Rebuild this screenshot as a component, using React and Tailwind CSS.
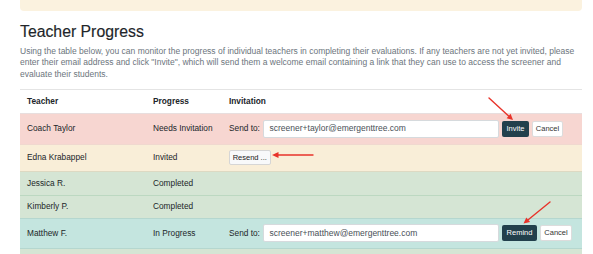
import React from "react";

function SendRow({ email, action, actionW, cancelW }) {
  return (
    <div className="flex items-center">
      <span className="w-[34px] shrink-0 text-[8.3px] text-[#212529]">Send to:</span>
      <div className="w-[236px] h-[18px] shrink-0 bg-white border border-[#d6dadd] rounded-[2px] flex items-center pl-[5.5px] text-[8.5px] text-[#495057]">
        {email}
      </div>
      <button
        className="ml-[3px] h-[16px] shrink-0 bg-[#22404c] rounded-[2px] text-white text-[7.5px] flex items-center justify-center"
        style={{ width: actionW }}
      >
        {action}
      </button>
      <button
        className="ml-[3px] h-[16px] shrink-0 bg-white border border-[#dcdcdc] rounded-[2px] text-[#333] text-[7.5px] flex items-center justify-center"
        style={{ width: cancelW }}
      >
        Cancel
      </button>
    </div>
  );
}

function Row({ h, bg, border, name, progress, children }) {
  return (
    <div className={`flex items-center border-t ${h} ${bg} ${border}`}>
      <div className="w-[126px] pl-[7px] text-[8.3px] text-[#212529]">{name}</div>
      <div className="w-[76px] pl-[7px] text-[8.3px] text-[#212529]">{progress}</div>
      <div className="flex-1 pl-[7px]">{children}</div>
    </div>
  );
}

export default function App() {
  return (
    <div className="relative w-[593px] h-[254px] overflow-hidden bg-white font-['Liberation_Sans',Arial,sans-serif]">
      <div className="ml-[20px] w-[562px]">
        <div className="h-[11px] bg-[#fbf2df] rounded-b-[4px]" />
        <h1 className="mt-[10.5px] text-[15.8px] leading-[19px] text-[#212529] [-webkit-text-stroke:0.15px_#212529]">Teacher Progress</h1>
        <p className="mt-[5px] text-[8.5px] leading-[11.5px] text-[#6c757d]">
          <span className="block whitespace-nowrap">
            Using the table below, you can monitor the progress of individual teachers in completing their evaluations. If any teachers are not yet invited, please
          </span>
          <span className="block whitespace-nowrap">
            enter their email address and click "Invite", which will send them a welcome email containing a link that they can use to access the screener and
          </span>
          <span className="block whitespace-nowrap">evaluate their students.</span>
        </p>
        <div className="mt-[8.5px]">
          <div className="flex items-center h-[24px] border-t border-[#e4e4e4] bg-white">
            <div className="w-[126px] pl-[7px] text-[8.3px] font-bold text-[#212529]">Teacher</div>
            <div className="w-[76px] pl-[7px] text-[8.3px] font-bold text-[#212529]">Progress</div>
            <div className="flex-1 pl-[7px] text-[8.3px] font-bold text-[#212529]">Invitation</div>
          </div>
          <Row h="h-[31px]" bg="bg-[#f7d6d1]" border="border-[#e8dede]" name="Coach Taylor" progress="Needs Invitation">
            <SendRow email="screener+taylor@emergenttree.com" action="Invite" actionW={27} cancelW={31} />
          </Row>
          <Row h="h-[27px]" bg="bg-[#f9eed8]" border="border-[#f0d8cf]" name="Edna Krabappel" progress="Invited">
            <button className="w-[41.5px] h-[14.5px] bg-[#f8f9fa] border border-[#d6d6d6] rounded-[2px] text-[7.5px] text-[#222] flex items-center justify-center">
              Resend ...
            </button>
          </Row>
          <Row h="h-[24px]" bg="bg-[#d5e5d4]" border="border-[#ddd9c2]" name="Jessica R." progress="Completed" />
          <Row h="h-[23px]" bg="bg-[#d5e5d4]" border="border-[#bcd8c1]" name="Kimberly P." progress="Completed" />
          <Row h="h-[30px]" bg="bg-[#c4e5df]" border="border-[#b5d7cf]" name="Matthew F." progress="In Progress">
            <SendRow email="screener+matthew@emergenttree.com" action="Remind" actionW={35} cancelW={32} />
          </Row>
          <Row h="h-[24px]" bg="bg-[#d5e5d4]" border="border-[#b5d7cf]" name="" progress="" />
        </div>
      </div>
      <svg className="absolute inset-0 pointer-events-none" width="593" height="254" viewBox="0 0 593 254">
        <g stroke="#e8332a" strokeWidth="1.4" fill="none" strokeLinecap="round">
          <line x1="489" y1="98" x2="508.6" y2="116" />
          <line x1="313" y1="155" x2="277.5" y2="155" />
          <line x1="550" y1="202" x2="528.2" y2="219.7" />
        </g>
        <g fill="#e8332a">
          <polygon points="513,120 506.6,118.2 510.6,113.7" />
          <polygon points="272,155 278.5,152 278.5,158" />
          <polygon points="523.5,223.5 526.3,217.4 530.1,222" />
        </g>
      </svg>
    </div>
  );
}
